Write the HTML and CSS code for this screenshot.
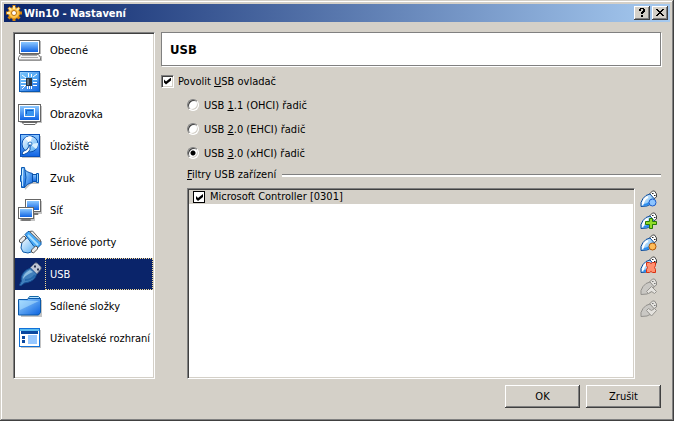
FILE: index.html
```html
<!DOCTYPE html>
<html lang="cs">
<head>
  <meta charset="utf-8">
  <title>Win10 - Nastavení</title>
  <link rel="stylesheet" href="styles.css">
</head>
<body>
  <svg class="defs" width="0" height="0" aria-hidden="true">
    <defs>
      <linearGradient id="blue" x1="0" y1="0" x2="1" y2="1">
        <stop offset="0" stop-color="#9fd8ff"/>
        <stop offset="1" stop-color="#0a62e0"/>
      </linearGradient>
      <linearGradient id="screen" x1="0" y1="0" x2="0" y2="1">
        <stop offset="0" stop-color="#8cc8ff"/>
        <stop offset="1" stop-color="#1064e4"/>
      </linearGradient>
      <linearGradient id="light" x1="0" y1="0" x2="1" y2="1">
        <stop offset="0" stop-color="#ffffff"/>
        <stop offset="1" stop-color="#4aa8f4"/>
      </linearGradient>
      <g id="plug">
        <path d="M9.500 4l3-3h2l2 3v3l-3 2z" fill="#fff" stroke="#444"/>
        <path d="M12 3.500h1.500M14 5.500h1.500" stroke="#222"/>
        <path d="M1 16.500v-4l2-4 3-3 4-1.500 4 4.500-2 5-5 2.500z" fill="url(#light)" stroke="#0c4c9c"/>
        <path d="M3 15c0-4 2-7 5-8" fill="none" stroke="#fff" stroke-width="2"/>
        <path d="M3.500 15c4 0 7-2 9-6" fill="none" stroke="#2c8cec" stroke-width="2"/>
      </g>
      <g id="plug-off">
        <path d="M9.500 4l3-3h2l2 3v3l-3 2z" fill="#e4e2de" stroke="#8c8a86"/>
        <path d="M12 3.500h1.500M14 5.500h1.500" stroke="#777"/>
        <path d="M1 16.500v-4l2-4 3-3 4-1.500 4 4.500-2 5-5 2.500z" fill="#cac8c4" stroke="#93918d"/>
      </g>
    </defs>
  </svg>

  <div class="window">
    <header class="titlebar">
      <svg class="gear" viewBox="0 0 16 16">
        <g stroke="#d88408" stroke-width="3">
          <path d="M8 0v16M0 8h16M2.500 2.500l11 11M13.500 2.500l-11 11"/>
        </g>
        <circle cx="8" cy="8" r="5.500" fill="#ffc64c" stroke="#e89a18"/>
        <path d="M8 1v3M1 8h3M3 3l2 2M13 3l-2 2" stroke="#ffe9a8" stroke-width="2"/>
        <circle cx="8" cy="8" r="2.500" fill="#fff" stroke="#b86c08"/>
      </svg>
      <h1>Win10 - Nastavení</h1>
      <button class="caption" aria-label="Nápověda">
        <svg viewBox="0 0 12 10" shape-rendering="crispEdges"><path d="M4 0h4v1h1v3H8v1H7v1H5V4h1V3h1V1H5v2H3V1h1zM5 7h2v2H5z"/></svg>
      </button>
      <button class="caption" aria-label="Zavřít">
        <svg viewBox="0 0 12 10" shape-rendering="crispEdges"><path d="M2 1h2v1h1v1h2V2h1V1h2v1H9v1H8v1H7v1h1v1h1v1h1v1H8V7H7V6H5v1H4v1H2V7h1V6h1V5h1V4H4V3H3V2H2z"/></svg>
      </button>
    </header>

    <div class="content">
      <nav class="sidebar">
        <a href="#general">
          <svg viewBox="0 0 24 24">
            <path d="M3 3h20v13H3zM1 18h23v5H1z" fill="#b8b8b8"/>
            <rect x="1.500" y="2.500" width="20" height="13" fill="#fff" stroke="#666"/>
            <rect x="3" y="4" width="17" height="10" fill="url(#screen)"/>
            <path d="M2.500 16.500h18l2 3v2.500H.5v-2.500z" fill="#f4f4f4" stroke="#777"/>
            <path d="M4 17.500h15M3 19.500h17" stroke="#aaa"/>
          </svg>
          <span>Obecné</span>
        </a>
        <a href="#system">
          <svg viewBox="0 0 24 24">
            <path d="M3 3h20v20H3z" fill="#c4c4c4"/>
            <rect x="1.500" y="1.500" width="20" height="20" fill="url(#blue)" stroke="#0a58b0"/>
            <path d="M3 3h17v8L3 17z" fill="#52b4f8" opacity=".5"/>
            <path d="M3 9.500h5M3 12.500h5M3 15.500h5M15 9.500h4M15 12.500h4M15 15.500h4M9.500 19v-3M11.500 19v-3M13.500 19v-3M10.500 7V3M13.500 7V4M15 7l4-3M7 16l-3 3M4 5l4 3" stroke="#fff"/>
            <path d="M8 8h6v8H8z" fill="#2a3440"/>
            <path d="M9 9h2v6H9z" fill="#61707c"/>
          </svg>
          <span>Systém</span>
        </a>
        <a href="#display">
          <svg viewBox="0 0 24 24">
            <path d="M2 4h22v17H2z" fill="#c4c4c4"/>
            <rect x=".5" y="2.500" width="22" height="17" fill="#fff" stroke="#666"/>
            <rect x="2" y="4" width="19" height="14" fill="url(#screen)"/>
            <rect x="6.500" y="6.500" width="10" height="8" fill="#3a94f0" stroke="#fff"/>
            <path d="M8.500 12V8.500H15" fill="none" stroke="#1260c8"/>
            <path d="M4 20.500h15l-2 2H6z" fill="#fff" stroke="#666"/>
          </svg>
          <span>Obrazovka</span>
        </a>
        <a href="#storage">
          <svg viewBox="0 0 24 24">
            <path d="M4 2h19v22H4z" fill="#c4c4c4"/>
            <rect x="2.500" y=".5" width="19" height="22" fill="url(#screen)" stroke="#0a50b8"/>
            <circle cx="12" cy="10" r="8" fill="url(#light)" stroke="#0a50b0"/>
            <path d="M12 10L7 4c3-2 6-2 7-1z" fill="#fff"/>
            <path d="M12 10l6 5c2-2 2-4 2-6z" fill="#d8f0ff"/>
            <circle cx="12" cy="10" r="2" fill="#fff" stroke="#2878c8"/>
            <path d="M4 20.500l1-3 4-2 3-5v5l-2 3-4 2z" fill="#fff" stroke="#0a50a8"/>
          </svg>
          <span>Úložiště</span>
        </a>
        <a href="#audio">
          <svg viewBox="0 0 24 24">
            <path d="M5 4l7 6 9 1v7h-8l-6 6z" fill="#c4c4c4"/>
            <path d="M12 8.500h7v7h-7z" fill="url(#screen)" stroke="#0a50a8"/>
            <path d="M18.500 7.500h2v9h-2z" fill="#8ed0ff" stroke="#0a58b0"/>
            <path d="M6.500 3.500c2 2 4 3 8 4v9c-4 1-6 2-8 5z" fill="url(#blue)" stroke="#0a50a8"/>
            <path d="M3.500 1.500h3q3 10 0 20h-3v-6h-1v-6h1z" fill="url(#blue)" stroke="#0a58b0"/>
            <path d="M4.500 3v17" stroke="#c4eaff"/>
          </svg>
          <span>Zvuk</span>
        </a>
        <a href="#network">
          <svg viewBox="0 0 24 24">
            <path d="M9 3h15v13H9zM2 11h15v12H2z" fill="#c4c4c4"/>
            <path d="M11 15.500h9v1h-9z" fill="#fff" stroke="#777"/>
            <rect x="7.500" y="1.500" width="15" height="12" fill="#fff" stroke="#666"/>
            <rect x="9" y="3" width="12" height="9" fill="url(#screen)"/>
            <path d="M3.500 21.500h9v1h-9z" fill="#fff" stroke="#777"/>
            <rect x=".5" y="9.500" width="15" height="11" fill="#fff" stroke="#666"/>
            <rect x="2" y="11" width="12" height="8" fill="url(#screen)"/>
          </svg>
          <span>Síť</span>
        </a>
        <a href="#serial">
          <svg viewBox="0 0 24 24">
            <path d="M4 12l6-5 9 9-3 5-6 2-5-1-2-4z" fill="url(#light)" stroke="#0a58a8"/>
            <path d="M7 4.500l3-3h4l9 10v3l-4 4-3-2z" fill="#48a8f4" stroke="#0a58a8"/>
            <path d="M11.500 1.500l3-.5 8 9v2z" fill="#eee" stroke="#666"/>
            <path d="M10 5l10 10" stroke="#a8e0ff" stroke-width="2"/>
            <path d="M1.500 10l4-4 2 1v2l-4 4-2-1zM13.500 20l4-4 2 1v2l-4 4-2-1z" fill="#eee" stroke="#555"/>
          </svg>
          <span>Sériové porty</span>
        </a>
        <a href="#usb" class="selected">
          <svg viewBox="0 0 24 24">
            <path d="M12 6l5-5h2l4 4v2l-5 6z" fill="#c0c6d4" stroke="#626b82"/>
            <path d="M16 4.500h2M19 7.500h2" stroke="#26304c" stroke-width="2"/>
            <path d="M1.500 23l2-4c-1-4 1-8 5-11l4-2 6 6c-1 5-5 8-12 9l-4 3z" fill="#417fbc" stroke="#155096"/>
            <path d="M5 17c0-4 3-7 7-9l3 2c-3 1-7 3-10 7z" fill="#8bbce0"/>
            <path d="M7 18c4 0 8-2 10-5" fill="none" stroke="#2468ac" stroke-width="2"/>
          </svg>
          <span>USB</span>
        </a>
        <a href="#shared">
          <svg viewBox="0 0 24 24">
            <path d="M3 6h21v17H3z" fill="#c4c4c4"/>
            <path d="M9.500 5.500l2-3h9l2 2v3h-13z" fill="#b8e4ff" stroke="#1468a8"/>
            <path d="M.5 5.500h9l1-1h12v14l-2 2.500H.5z" fill="url(#blue)" stroke="#0a58a8"/>
            <path d="M2 19V7h19L2 16z" fill="#b8e8ff" opacity=".5"/>
          </svg>
          <span>Sdílené složky</span>
        </a>
        <a href="#interface">
          <svg viewBox="0 0 24 24">
            <path d="M3 4h20v18H3z" fill="#c4c4c4"/>
            <rect x="1.500" y="2.500" width="20" height="18" fill="#fff" stroke="#1070d8"/>
            <path d="M2 3h19v2H2z" fill="#5cbcf0"/>
            <path d="M3 5h17v3H3z" fill="#0a48a0"/>
            <path d="M4 10h3v3H4zM4 14h3v3H4z" fill="#0a48a0"/>
            <path d="M10 9h9v9h-9z" fill="#98c8ff"/>
          </svg>
          <span>Uživatelské rozhraní</span>
        </a>
      </nav>

      <main class="page">
        <h2>USB</h2>

        <label class="option enable">
          <input type="checkbox" checked>
          <span>Povolit <u>U</u>SB ovladač</span>
        </label>

        <div class="controllers">
          <label class="option">
            <input type="radio" name="controller">
            <span>USB <u>1</u>.1 (OHCI) řadič</span>
          </label>
          <label class="option">
            <input type="radio" name="controller">
            <span>USB <u>2</u>.0 (EHCI) řadič</span>
          </label>
          <label class="option">
            <input type="radio" name="controller" checked>
            <span>USB <u>3</u>.0 (xHCI) řadič</span>
          </label>
        </div>

        <h3><span><u>F</u>iltry USB zařízení</span></h3>

        <div class="filters">
          <div class="list">
            <label class="filter">
              <input type="checkbox" class="flat" checked>
              <span>Microsoft Controller [0301]</span>
            </label>
          </div>

          <div class="tools">
            <button aria-label="Přidat prázdný filtr">
              <svg viewBox="0 0 18 18">
                <use href="#plug"/>
                <circle cx="12.500" cy="12.500" r="3.500" fill="#8cc4ff" stroke="#1c5cc8"/>
              </svg>
            </button>
            <button aria-label="Přidat filtr ze zařízení">
              <svg viewBox="0 0 18 18">
                <use href="#plug"/>
                <path d="M9.500 6.500h3v3h4v3h-4v4h-3v-4h-4v-3h4z" fill="#90dc28" stroke="#287808"/>
              </svg>
            </button>
            <button aria-label="Upravit filtr">
              <svg viewBox="0 0 18 18">
                <use href="#plug"/>
                <circle cx="12.500" cy="12.500" r="3.500" fill="#ffbc58" stroke="#b05808"/>
              </svg>
            </button>
            <button aria-label="Odstranit filtr">
              <svg viewBox="0 0 18 18">
                <use href="#plug"/>
                <path d="M6.500 6.500h3l1.500 1 1.500-1h3v3l-1 2 1 2v3h-3l-1.500-1-1.500 1h-3v-3l1-2-1-2z" fill="#ff9070" stroke="#d83010"/>
              </svg>
            </button>
            <button aria-label="Posunout nahoru" disabled>
              <svg viewBox="0 0 18 18">
                <use href="#plug-off"/>
                <path d="M11.500 8.500l5 5-2 2-3-2-3 2-2-2z" fill="#e4e2de" stroke="#96948f"/>
              </svg>
            </button>
            <button aria-label="Posunout dolů" disabled>
              <svg viewBox="0 0 18 18">
                <use href="#plug-off"/>
                <path d="M8.500 8.500l3 2 3-2 2 2-5 5.500-5-5.500z" fill="#e4e2de" stroke="#96948f"/>
              </svg>
            </button>
          </div>
        </div>
      </main>
    </div>

    <footer class="buttons">
      <button>OK</button>
      <button>Zrušit</button>
    </footer>
  </div>
</body>
</html>
```
FILE: styles.css
```css
* {
  box-sizing: border-box;
}
body {
  margin: 0;
  background-color: #d4d0c8;
  color: #000;
  font-family: "DejaVu Sans Condensed", "DejaVu Sans", sans-serif;
  font-size: 11px;
  line-height: 14px;
}
h1, h2, h3 {
  margin: 0;
  font-size: 11px;
}
button {
  font: inherit;
  color: inherit;
}
svg {
  display: block;
  flex: none;
}
.defs {
  position: absolute;
}
.window {
  display: flex;
  flex-direction: column;
  min-height: 100vh;
  padding: 4px;
  box-shadow: inset -1px -1px #404040, inset 1px 1px #d4d0c8, inset -2px -2px #808080, inset 2px 2px #fff;
}

/* title bar */
.titlebar {
  display: flex;
  align-items: center;
  height: 18px;
  padding: 0 2px;
  background: linear-gradient(to right, #0a246a, #a6caf0);
  color: #fff;
}
.gear {
  width: 16px;
  height: 16px;
}
.titlebar h1 {
  flex: 1;
  padding: 2px 0 0 2px;
}
.caption {
  display: flex;
  align-items: center;
  justify-content: center;
  width: 16px;
  height: 14px;
  padding: 0;
  border: 0;
  background-color: #d4d0c8;
  color: #000;
  box-shadow: inset -1px -1px #404040, inset 1px 1px #fff, inset -2px -2px #808080;
}
.caption + .caption {
  margin-left: 2px;
}
.caption svg {
  width: 12px;
  height: 10px;
}

.content {
  flex: 1;
  display: flex;
  gap: 6px;
  padding: 10px 9px 0;
}

/* categories */
.sidebar, .list {
  background-color: #fff;
  border: 1px solid;
  border-color: #808080 #fff #fff #808080;
  box-shadow: inset 1px 1px #404040, inset -1px -1px #d4d0c8;
}
.sidebar {
  flex: none;
  width: 142px;
  padding: 1px;
}
.sidebar a {
  display: flex;
  align-items: center;
  height: 32px;
  padding-left: 3px;
  color: #000;
  text-decoration: none;
}
.sidebar svg {
  width: 24px;
  height: 24px;
}
.sidebar span {
  flex: 1;
  min-width: 0;
  margin-left: 3px;
  padding: 9px 0 7px 4px;
  border: 1px solid transparent;
  white-space: nowrap;
}
.sidebar .selected {
  background-color: #0a246a;
  color: #fff;
}
.sidebar .selected span {
  border: 1px dotted #f5db95;
}

/* page */
.page {
  flex: 1;
  display: flex;
  flex-direction: column;
}
.page h2 {
  padding: 10px 8px 8px;
  border: 1px solid #808080;
  background-color: #fff;
  box-shadow: 1px 1px #fff;
  font-size: 13px;
}
.option {
  display: flex;
  align-items: center;
  gap: 4px;
}
.option span {
  padding-top: 2px;
}
.enable {
  margin-top: 7px;
}
.controllers {
  display: flex;
  flex-direction: column;
  gap: 8px;
  margin: 8px 0 0 26px;
}
input {
  appearance: none;
  flex: none;
  width: 13px;
  height: 13px;
  margin: 0;
  background-color: #fff;
  border: 1px solid;
  border-color: #808080 #fff #fff #808080;
  box-shadow: inset 1px 1px #404040, inset -1px -1px #d4d0c8;
}
input[type="checkbox"]:checked::after {
  content: "";
  display: block;
  width: 7px;
  height: 7px;
  margin: 2px;
  background-color: #000;
  clip-path: polygon(0 2px, 2px 4px, 7px 0, 7px 3px, 2px 7px, 0 5px);
}
input[type="radio"] {
  width: 12px;
  height: 12px;
  border-radius: 50%;
}
input[type="radio"]:checked {
  background-image: radial-gradient(circle, #000 2px, transparent 3px);
}
.controllers .option {
  gap: 5px;
}
input.flat {
  width: 12px;
  height: 12px;
  border: 1px solid #000;
  box-shadow: none;
}
.page h3 {
  display: flex;
  align-items: center;
  gap: 6px;
  margin: 7px 0 6px 26px;
  font-weight: normal;
}
.page h3::after {
  content: "";
  flex: 1;
  height: 2px;
  background-color: #fff;
  border-top: 1px solid #808080;
}

/* usb filters */
.filters {
  flex: 1;
  display: flex;
  gap: 5px;
  margin-left: 26px;
}
.list {
  flex: 1;
  padding: 1px;
}
.filter {
  display: flex;
  align-items: center;
  gap: 5px;
  height: 14px;
  padding-left: 4px;
  background-color: #d4d0c8;
}
.tools {
  display: flex;
  flex-direction: column;
  gap: 4px;
  padding: 2px 3px 0 0;
}
.tools button {
  padding: 0;
  border: 0;
  background: none;
}
.tools svg {
  width: 18px;
  height: 18px;
}

/* dialog buttons */
.buttons {
  display: flex;
  justify-content: flex-end;
  gap: 6px;
  padding: 6px 9px 9px;
}
.buttons button {
  width: 75px;
  height: 23px;
  padding: 0;
  border: 0;
  background-color: #d4d0c8;
  box-shadow: inset -1px -1px #404040, inset 1px 1px #fff, inset -2px -2px #808080;
}
```
